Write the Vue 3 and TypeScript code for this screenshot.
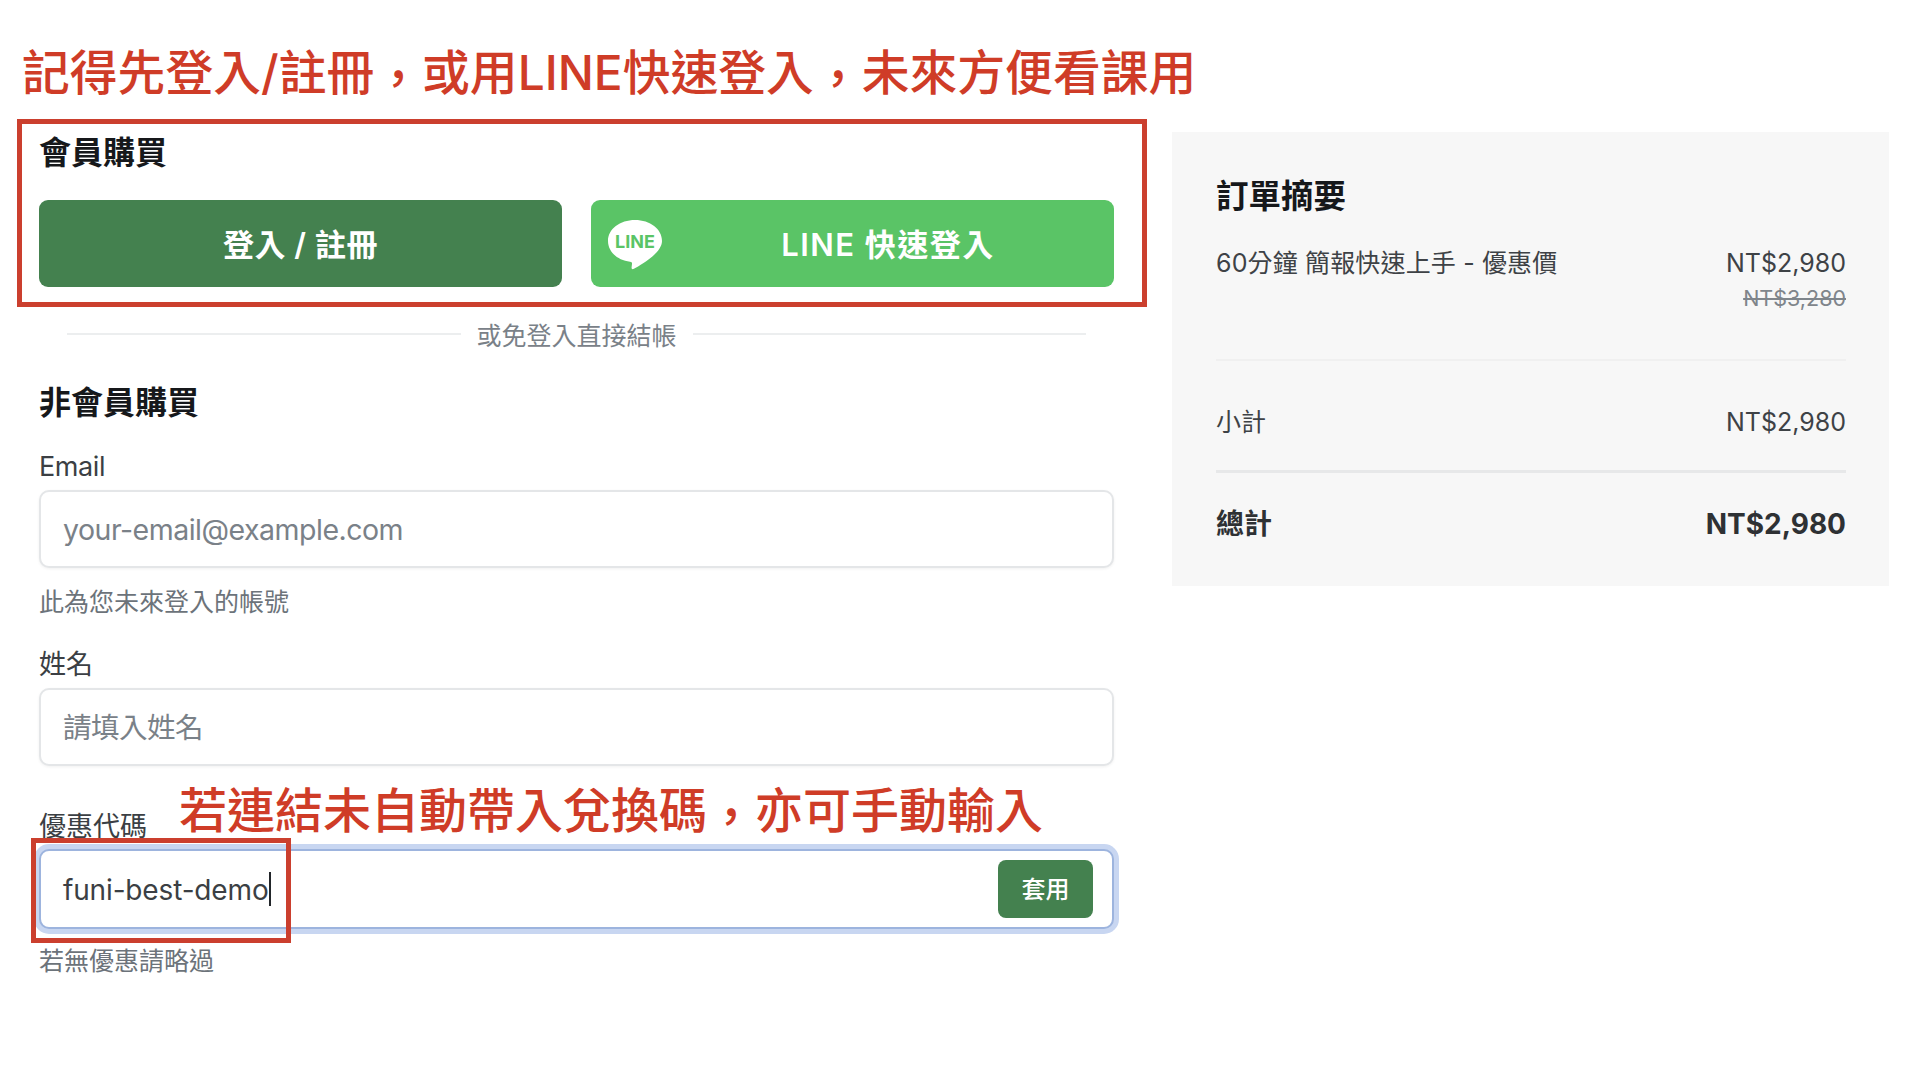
<script setup lang="ts">
const email = 'your-email@example.com'
</script>

<template>
  <div class="page">
    <p class="note note-top">記得先登入/註冊<span class="comma">，</span>或用LINE快速登入<span class="comma">，</span>未來方便看課用</p>
    <div class="mark mark-member"></div>
    <div class="mark mark-code"></div>

    <main class="form-col">
      <h2 class="heading">會員購買</h2>
      <div class="login-row">
        <button class="btn btn-login">登入 / 註冊</button>
        <button class="btn btn-line">
          <svg class="line-logo" viewBox="0 0 54 50" aria-hidden="true">
            <path d="M27 0C12 0 0 9 0 21c0 11 10 19.500 22 20.700 1.600.2 2.200.9 2 2.300l-.4 3.300c-.2 1.500.6 2.400 2.300 1.500C33 45 54 33 54 21 54 9 42 0 27 0Z" fill="#fff" />
            <text x="27" y="28" text-anchor="middle" class="logo-text">LINE</text>
          </svg>
          <span class="line-label">LINE 快速登入</span>
        </button>
      </div>

      <div class="divider"><span>或免登入直接結帳</span></div>

      <h2 class="heading">非會員購買</h2>

      <label class="label label-first">Email</label>
      <input class="field" type="text" :placeholder="email" />
      <p class="hint">此為您未來登入的帳號</p>

      <label class="label">姓名</label>
      <input class="field" type="text" placeholder="請填入姓名" />

      <div class="code-label-row">
        <label class="label label-code">優惠代碼</label>
        <p class="note note-code">若連結未自動帶入兌換碼<span class="comma">，</span>亦可手動輸入</p>
      </div>
      <div class="field field-focus">
        <span class="code-value">funi-best-demo</span>
        <button class="btn-apply">套用</button>
      </div>
      <p class="hint hint-code">若無優惠請略過</p>
    </main>

    <aside class="summary">
      <h2 class="heading summary-heading">訂單摘要</h2>
      <div class="item-row">
        <span class="item-name">60分鐘 簡報快速上手 - 優惠價</span>
        <div class="prices">
          <span>NT$2,980</span>
          <s class="old-price">NT$3,280</s>
        </div>
      </div>
      <div class="subtotal-row">
        <span>小計</span>
        <span>NT$2,980</span>
      </div>
      <div class="total-row">
        <span>總計</span>
        <span class="total-price">NT$2,980</span>
      </div>
    </aside>
  </div>
</template>

<style>
html, body { background: #fff; }
</style>

<style scoped>
.page {
  position: relative;
  width: 1920px;
  height: 1080px;
  box-sizing: border-box;
  padding: 132px 31px 0 39px;
  display: flex;
  align-items: flex-start;
  gap: 58px;
  overflow: hidden;
  background: #fff;
  font-family: Inter, "Noto Sans CJK TC", "Noto Sans", sans-serif;
  color: #3b3f44;
}
.note {
  margin: 0;
  color: #cf3c27;
  white-space: nowrap;
  font-weight: 500;
}
.comma {
  line-height: 0;
  vertical-align: -6px;
}
.note-top {
  position: absolute;
  left: 22px;
  top: 38px;
  font-size: 47.800px;
  line-height: 70px;
}
.note-code {
  position: absolute;
  left: 140px;
  top: 15px;
  font-size: 48px;
  line-height: 60px;
}
.mark {
  position: absolute;
  box-sizing: border-box;
  border: 5px solid #cb3f2e;
  pointer-events: none;
  z-index: 2;
}
.mark-member { left: 17px; top: 119px; width: 1130px; height: 188px; }
.mark-code { left: 31px; top: 838px; width: 260px; height: 105px; }

.form-col {
  width: 1075px;
  flex: none;
  display: flex;
  flex-direction: column;
}
.heading {
  margin: 0;
  font-size: 32px;
  line-height: 42px;
  font-weight: 700;
  color: #16181b;
}
.summary-heading { font-size: 32.500px; }
.login-row {
  margin-top: 26px;
  display: grid;
  grid-template-columns: 1fr 1fr;
  gap: 29px;
}
.btn {
  height: 87px;
  border: 0;
  border-radius: 9px;
  color: #fff;
  font-family: inherit;
  font-size: 31px;
  line-height: 40px;
  font-weight: 600;
  padding: 2px 0 0;
  letter-spacing: 0.5px;
}
.btn-login { background: #44814f; }
.btn-line {
  background: #5ac466;
  display: flex;
  align-items: center;
  padding-left: 17px;
}
.line-logo { width: 54px; height: 50px; flex: none; }
.logo-text {
  font-size: 18px;
  font-weight: 700;
  fill: #5ac466;
  letter-spacing: 0;
}
.line-label { flex: 1; text-align: center; letter-spacing: 1.5px; }

.divider {
  margin: 27px 28px 28px;
  height: 40px;
  display: flex;
  align-items: center;
  gap: 16px;
  color: #7a8188;
  font-size: 25px;
}
.divider::before,
.divider::after {
  content: "";
  flex: 1;
  height: 2px;
  background: #eceeef;
}
.label {
  display: block;
  font-size: 27px;
  line-height: 34px;
  padding-top: 2px;
  margin-top: 27px;
  color: #3b3f44;
}
.label-first { margin-top: 24px; letter-spacing: -0.4px; }
.label-code { margin-top: 43px; padding-top: 0; line-height: 36px; }
.field {
  box-sizing: border-box;
  width: 100%;
  height: 78px;
  margin-top: 6px;
  padding: 0 22px;
  border: 2px solid #e4e6e8;
  border-radius: 10px;
  background: #fff;
  box-shadow: 0 1px 3px rgba(0, 0, 0, 0.06);
  font-family: inherit;
  font-size: 28.500px;
  letter-spacing: -0.5px;
  color: #3b3f44;
  outline: none;
}
.field::placeholder { color: #7a8188; opacity: 1; }
.hint {
  margin: 15px 0 0;
  padding-top: 2px;
  font-size: 25px;
  line-height: 34px;
  color: #6c737a;
}
.code-label-row { position: relative; }
.field-focus {
  height: 80px;
  margin-top: 4px;
  display: flex;
  align-items: center;
  justify-content: space-between;
  padding-right: 19px;
  border-color: #9db4de;
  box-shadow: 0 0 0 5px #c8d6f1;
  font-size: 28px;
  letter-spacing: -0.15px;
}
.hint-code { margin-top: 13px; }
.code-value {
  border-right: 2px solid #22262a;
  line-height: 32px;
  padding-top: 2px;
}
.btn-apply {
  width: 95px;
  height: 58px;
  border: 0;
  border-radius: 8px;
  background: #44814f;
  color: #fff;
  font-family: inherit;
  font-size: 24px;
  font-weight: 500;
  padding: 0 0 3px;
  letter-spacing: 0;
}

.summary {
  width: 717px;
  height: 454px;
  flex: none;
  box-sizing: border-box;
  padding: 44px 43px 0 44px;
  background: #f7f7f7;
  font-size: 25px;
  color: #3e4246;
}
.item-row {
  margin-top: 27px;
  height: 114px;
  display: flex;
  justify-content: space-between;
  align-items: flex-start;
  border-bottom: 2px solid #f0f0f0;
  line-height: 36px;
}
.item-name { letter-spacing: 0.15px; }
.prices {
  display: flex;
  flex-direction: column;
  align-items: flex-end;
}
.old-price {
  font-size: 21.500px;
  line-height: 35px;
  color: #7f858b;
}
.subtotal-row {
  height: 112px;
  padding-top: 12px;
  display: flex;
  justify-content: space-between;
  align-items: center;
  border-bottom: 3px solid #e7e8e9;
  box-sizing: border-box;
  line-height: 38px;
}
.total-row {
  margin-top: 30px;
  display: flex;
  justify-content: space-between;
  align-items: center;
  font-size: 28px;
  line-height: 42px;
  font-weight: 600;
  color: #2e3134;
}
.total-price { font-size: 28px; font-weight: 700; }
</style>
